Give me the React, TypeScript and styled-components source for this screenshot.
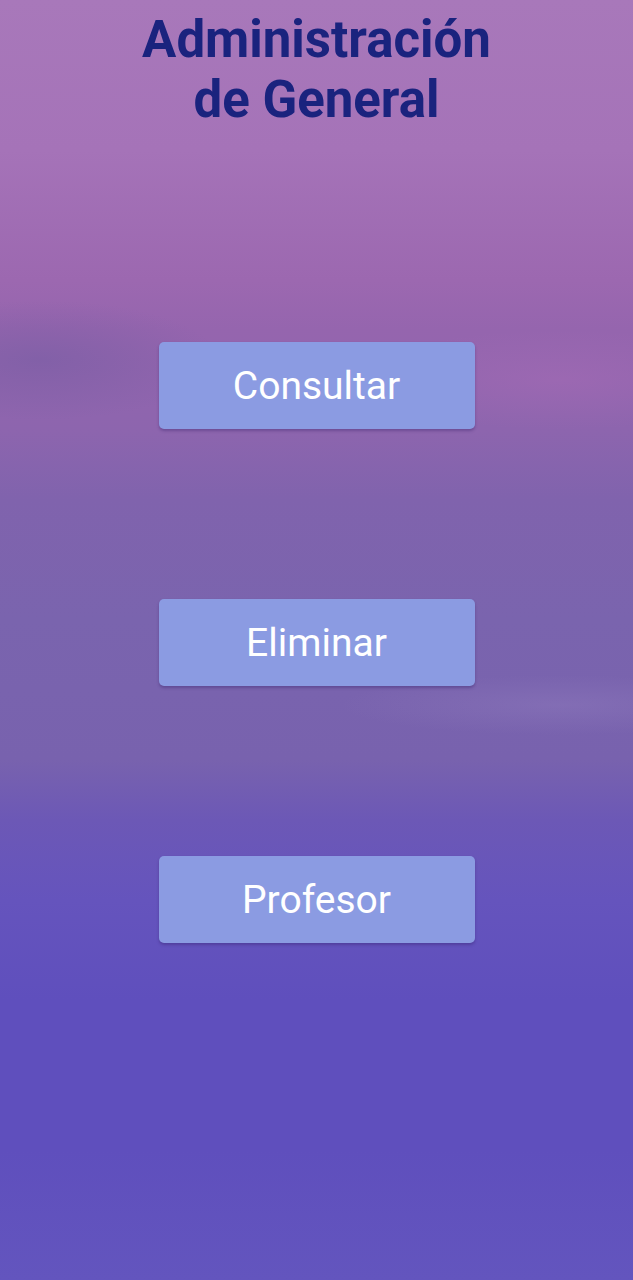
import React from "react";
import styled, { createGlobalStyle } from "styled-components";

const Global = createGlobalStyle`
  html, body { margin: 0; padding: 0; }
  body { font-family: Roboto, "Noto Sans", sans-serif; }
`;

const Screen = styled.div`
  position: relative;
  width: 633px;
  height: 1280px;
  overflow: hidden;
  display: flex;
  flex-direction: column;
  align-items: center;
  background:
    radial-gradient(ellipse 180px 60px at 40px 360px, rgba(110, 90, 160, 0.45), transparent),
    radial-gradient(ellipse 220px 30px at 560px 705px, rgba(160, 140, 200, 0.25), transparent),
    radial-gradient(ellipse 200px 50px at 560px 380px, rgba(175, 110, 185, 0.35), transparent),
    linear-gradient(
      180deg,
      #a878ba 0px,
      #a573b8 150px,
      #9c68b0 280px,
      #9565ae 330px,
      #8d65ae 430px,
      #8063ad 500px,
      #7a64ae 620px,
      #7862ae 760px,
      #6c58b6 820px,
      #6554bd 900px,
      #5f4fbd 1000px,
      #5f4fbd 1150px,
      #6355be 1280px
    );
`;

const Title = styled.h1`
  margin: 10px 0 0;
  font-family: Roboto, "Noto Sans", sans-serif;
  font-weight: 700;
  font-size: 51px;
  line-height: 60px;
  color: #1a237e;
  text-align: center;
`;

const Menu = styled.div`
  display: flex;
  flex-direction: column;
  align-items: center;
  gap: 170px;
  margin-top: 212px;
`;

const MenuButton = styled.button`
  width: 316px;
  height: 87px;
  padding: 0;
  border: none;
  border-radius: 5px;
  background: #8b9be2;
  color: #ffffff;
  font-family: Roboto, "Noto Sans", sans-serif;
  font-size: 39px;
  font-weight: 400;
  box-shadow: 0 2px 3px rgba(50, 30, 100, 0.35);
  cursor: pointer;
`;

export default function App() {
  return (
    <>
      <Global />
      <Screen>
        <Title>
          Administración
          <br />
          de General
        </Title>
        <Menu>
          <MenuButton>Consultar</MenuButton>
          <MenuButton>Eliminar</MenuButton>
          <MenuButton>Profesor</MenuButton>
        </Menu>
      </Screen>
    </>
  );
}
